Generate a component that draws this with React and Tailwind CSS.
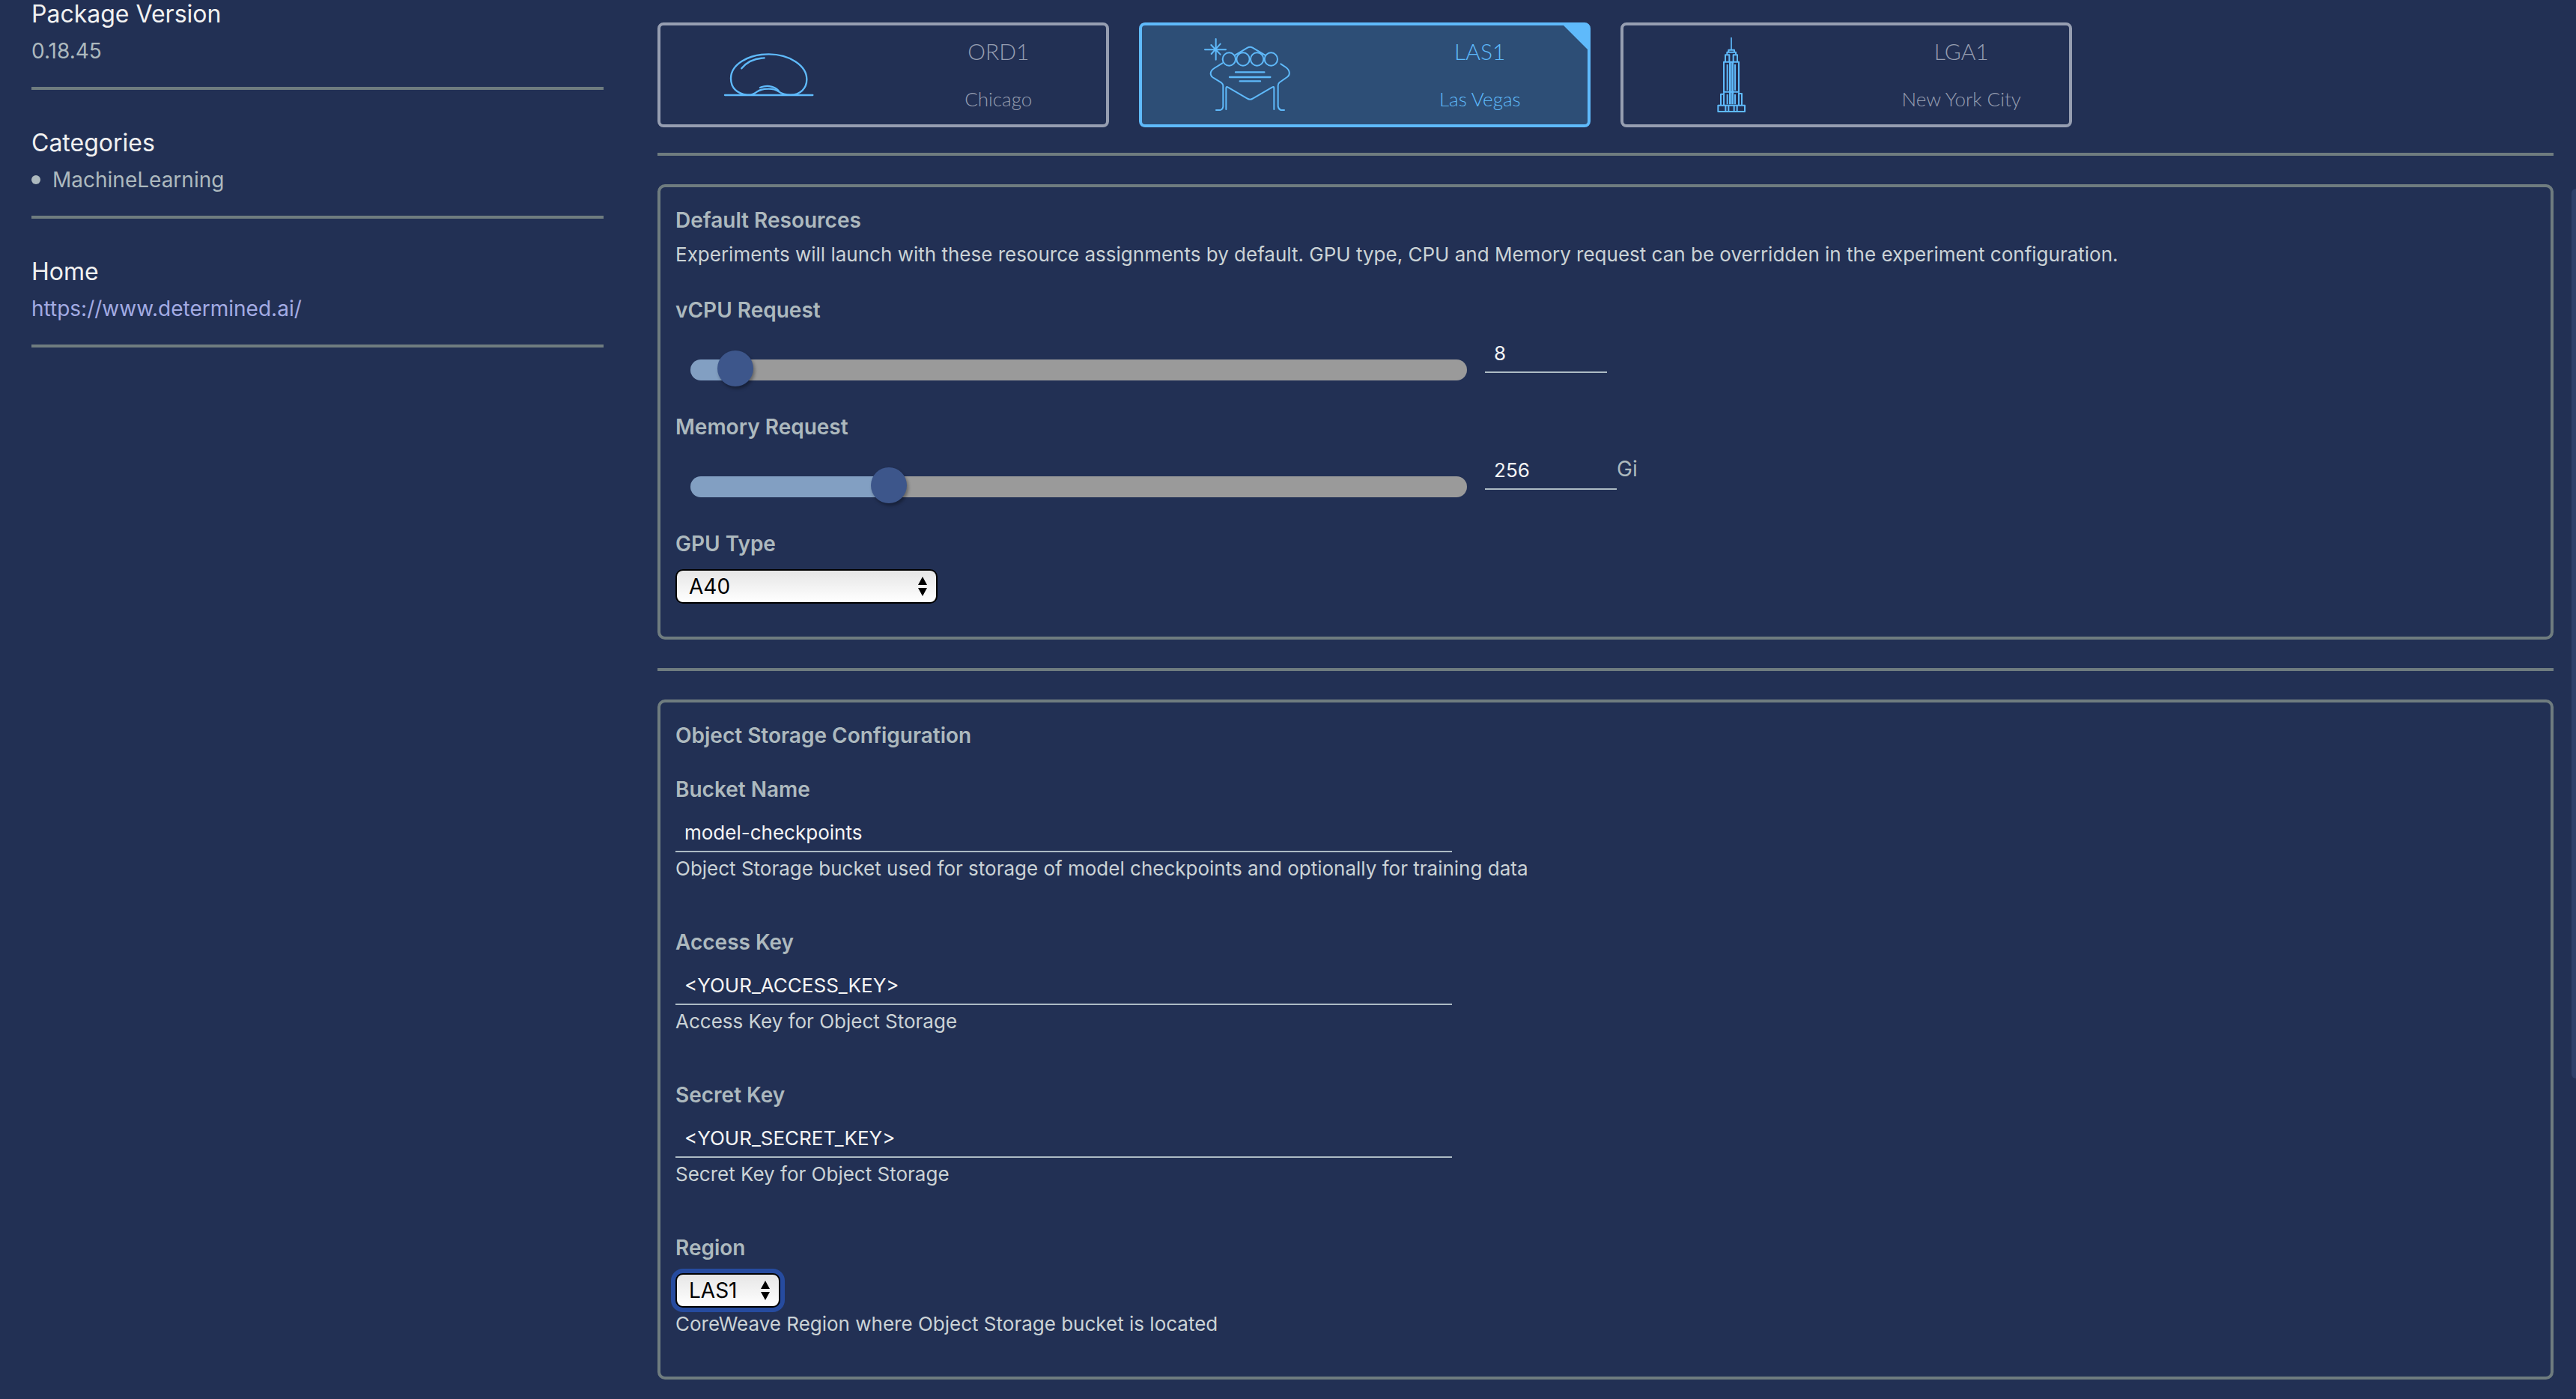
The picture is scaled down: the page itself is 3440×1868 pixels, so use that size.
import React, { useState } from "react";

function BeanIcon() {
  return (
    <svg viewBox="0 0 420 360" className="h-[120px] w-[140px]" fill="none" stroke="currentColor" strokeWidth="7" strokeLinecap="round" strokeLinejoin="round" aria-hidden="true">
      <path d="M125 260C85 256 60 232 60 194C60 138 130 97 212 97C294 97 364 142 364 198C364 234 338 260 299 260C274 260 262 254 252 247C240 239 228 236 212 236C190 236 175 240 164 248C153 256 143 262 125 260Z" />
      <path d="M36 261H388" />
      <path d="M103 154C122 130 152 114 194 112" />
      <path d="M177 231C200 221 230 222 251 243" />
    </svg>
  );
}

function VegasIcon() {
  return (
    <svg viewBox="0 0 420 360" className="h-[120px] w-[140px]" fill="none" stroke="currentColor" strokeWidth="6" strokeLinecap="round" strokeLinejoin="round" aria-hidden="true">
      <path d="M74 36V119M30 79H114M55 60L92 98M92 56L56 96" />
      <circle cx="127" cy="117" r="26" />
      <circle cx="183" cy="117" r="26" />
      <circle cx="239" cy="117" r="26" />
      <circle cx="295" cy="117" r="26" />
      <path d="M151 101L201 71Q211 65 221 71L271 101" />
      <path d="M100 133L68 153C48 166 48 184 68 194L97 212Q103 217 103 223V307Q101 319 91 321H75" />
      <path d="M334 136L355 150C373 164 373 182 355 192L329 210Q323 214 323 223V306Q325 318 335 321H348" />
      <path d="M115 318V232Q116 225 123 230L199 274Q211 282 223 274L299 230Q307 225 307 232V318" />
      <path d="M153 169H268M129 189H292M170 205H252" strokeWidth="7" />
    </svg>
  );
}

function EmpireIcon() {
  return (
    <svg viewBox="-114 0 420 360" className="h-[120px] w-[140px]" fill="none" stroke="currentColor" strokeWidth="6" strokeLinejoin="round" aria-hidden="true">
      <path d="M96 30V78" strokeWidth="5" />
      <path d="M85 80H108V89H85ZM79 98V89H114V98" />
      <path d="M72 127V100H88V127M104 127V100H120V127" />
      <path d="M66 128H126V248H66Z" />
      <path d="M80 138V242M111 138V242M90 128V298M102 128V298" />
      <path d="M96 128V298" opacity="0.7" />
      <path d="M54 300V257H66V300M138 300V255H126V300" />
      <path d="M66 250V300M126 250V300M80 258V298M111 258V298" />
      <path d="M43 302H150V327H43ZM73 302V327M85 302V327M107 302V327M119 302V327" />
    </svg>
  );
}

const regions = [
  { code: "ORD1", city: "Chicago", Icon: BeanIcon },
  { code: "LAS1", city: "Las Vegas", Icon: VegasIcon },
  { code: "LGA1", city: "New York City", Icon: EmpireIcon },
];

function RegionCard({ code, city, Icon, selected, onSelect }) {
  const tone = selected
    ? "border-[#5fbafb] bg-[#2d4e76] text-[#5fbafb]"
    : "border-[#969eb1] text-[#969eb1]";
  return (
    <button
      type="button"
      aria-pressed={selected}
      onClick={onSelect}
      className={`relative grid h-[140px] grid-cols-2 items-center gap-5 rounded-lg border-4 font-[Lato,sans-serif] font-light ${tone}`}
    >
      <span className="flex justify-center text-[#5fbafb]">
        <Icon />
      </span>
      <span className="flex flex-col gap-6 text-center">
        <span className="text-[30px] leading-10">{code}</span>
        <span className="text-[26px] leading-10">{city}</span>
      </span>
      {selected && (
        <svg viewBox="0 0 32 32" className="absolute top-0 right-0 size-8" fill="currentColor" aria-hidden="true">
          <path d="M0 0H32V32Z" />
        </svg>
      )}
    </button>
  );
}

function Rule() {
  return <hr className="border-t-4 border-[#6f7c7f]" />;
}

function SideSection({ title, children }) {
  return (
    <section className="border-b-4 border-[#6f7c7f] pb-6">
      <h3 className="mb-[6px] text-[32px] leading-[38px] text-[#f1f1f1]">{title}</h3>
      {children}
    </section>
  );
}

function Panel({ title, className, children }) {
  return (
    <section className={`rounded-[10px] border-4 border-[#6f7c7f] px-5 pt-5 ${className}`}>
      <h4 className="text-[28px] leading-[48px] font-semibold">{title}</h4>
      {children}
    </section>
  );
}

const labelClass = "block text-[28px] leading-[48px] font-semibold";
const helpClass = "text-[26px] leading-[44px] text-[#cbd3d6]";
const inputClass = "h-[52px] border-b-2 border-[#adbbc4] bg-transparent text-[26px] text-[#f5f5f5] outline-none";

function SliderField({ id, label, min, max, initial, unit, numberWidth }) {
  const [value, setValue] = useState(initial);
  const share = (value - min) / (max - min);
  const fill = `calc(24px + (100% - 48px) * ${share})`;
  return (
    <div className="mt-7">
      <label htmlFor={id} className={labelClass}>{label}</label>
      <div className="mt-2 flex items-start">
        <input
          id={id}
          type="range"
          min={min}
          max={max}
          value={value}
          onChange={(e) => setValue(Number(e.target.value))}
          style={{ "--track": `linear-gradient(to right, #829fc2 ${fill}, #9a9a9a ${fill})` }}
          className="mt-6 ml-5 h-12 w-[41.75%] appearance-none bg-transparent [&::-webkit-slider-runnable-track]:h-7 [&::-webkit-slider-runnable-track]:rounded-[14px] [&::-webkit-slider-runnable-track]:bg-(image:--track) [&::-webkit-slider-thumb]:-mt-3 [&::-webkit-slider-thumb]:size-12 [&::-webkit-slider-thumb]:appearance-none [&::-webkit-slider-thumb]:rounded-full [&::-webkit-slider-thumb]:bg-[#3d568b] [&::-webkit-slider-thumb]:shadow-[2px_3px_4px_rgba(0,0,0,0.35)]"
        />
        <input
          type="text"
          inputMode="numeric"
          aria-label={`${label} value`}
          value={value}
          onChange={(e) => setValue(Number(e.target.value) || min)}
          className={`ml-6 px-3 ${inputClass} ${numberWidth}`}
        />
        {unit && <span className="text-[28px] leading-[48px]">{unit}</span>}
      </div>
    </div>
  );
}

function TextField({ id, label, initial, help, className }) {
  return (
    <div className={className}>
      <label htmlFor={id} className={labelClass}>{label}</label>
      <input id={id} type="text" defaultValue={initial} className={`mt-2 block w-[41.75%] px-3 ${inputClass}`} />
      <p className={helpClass}>{help}</p>
    </div>
  );
}

function SelectField({ id, label, options, initial, width, focused, children, className }) {
  return (
    <div className={className}>
      <label htmlFor={id} className={labelClass}>{label}</label>
      <div className={`relative mt-[10px] ${width}`}>
        <select
          id={id}
          defaultValue={initial}
          className={`block h-[46px] w-full appearance-none rounded-[10px] border-2 border-black bg-linear-to-b from-[#e6e6e6] to-white pl-4 text-[28px] leading-[42px] text-black outline-none ${focused ? "ring-6 ring-[#264b9f]" : ""}`}
        >
          {options.map((o) => (
            <option key={o}>{o}</option>
          ))}
        </select>
        <svg viewBox="0 0 12 26" className="pointer-events-none absolute top-[10px] right-[14px] h-[26px] w-3" fill="#000" aria-hidden="true">
          <path d="M6 0L12 11H0ZM6 26L0 15H12Z" />
        </svg>
      </div>
      {children}
    </div>
  );
}

export default function App() {
  const [region, setRegion] = useState("LAS1");
  return (
    <div className="h-screen overflow-hidden bg-[#223054] font-[Inter,sans-serif] text-[#adb9be]">
      <div className="grid grid-cols-[191fr_633fr] items-start gap-[72px] pr-[30px] pl-[42px]">
        <aside className="flex flex-col gap-[52px] text-[28px] leading-[48px]">
          <SideSection title="Package Version">
            <p>0.18.45</p>
          </SideSection>
          <SideSection title="Categories">
            <ul>
              <li className="flex items-center gap-4 before:size-3 before:rounded-full before:bg-current">MachineLearning</li>
            </ul>
          </SideSection>
          <SideSection title="Home">
            <a href="https://www.determined.ai/" className="block text-[#a3abe3]">https://www.determined.ai/</a>
          </SideSection>
        </aside>

        <main className="pt-[30px]">
          <div className="mb-[34px] grid grid-cols-4 gap-10">
            {regions.map((r) => (
              <RegionCard key={r.code} {...r} selected={region === r.code} onSelect={() => setRegion(r.code)} />
            ))}
          </div>

          <div className="flex flex-col gap-[38px]">
            <Rule />
            <Panel title="Default Resources" className="pb-11">
              <p className={helpClass}>
                Experiments will launch with these resource assignments by default. GPU type, CPU and Memory request can be overridden in the experiment configuration.
              </p>
              <SliderField id="vcpu" label="vCPU Request" min={1} max={192} initial={8} numberWidth="w-[163px]" />
              <SliderField id="memory" label="Memory Request" min={8} max={1024} initial={256} unit="Gi" numberWidth="w-[176px]" />
              <SelectField id="gpu" label="GPU Type" options={["A40", "A100", "RTX A6000"]} initial="A40" width="w-[350px]" className="mt-7" />
            </Panel>
            <Rule />
            <Panel title="Object Storage Configuration" className="pb-12">
              <TextField id="bucket" label="Bucket Name" initial="model-checkpoints" help="Object Storage bucket used for storage of model checkpoints and optionally for training data" className="mt-6" />
              <TextField id="access" label="Access Key" initial="<YOUR_ACCESS_KEY>" help="Access Key for Object Storage" className="mt-[52px]" />
              <TextField id="secret" label="Secret Key" initial="<YOUR_SECRET_KEY>" help="Secret Key for Object Storage" className="mt-[52px]" />
              <SelectField id="region" label="Region" options={["LAS1", "ORD1", "LGA1"]} initial="LAS1" width="w-[140px]" focused className="mt-[52px]">
                <p className={helpClass}>CoreWeave Region where Object Storage bucket is located</p>
              </SelectField>
            </Panel>
          </div>
        </main>
      </div>
      <div className="fixed top-[252px] right-0 h-[1188px] w-[6px] rounded-l-md bg-[#2f4069]" aria-hidden="true" />
    </div>
  );
}
